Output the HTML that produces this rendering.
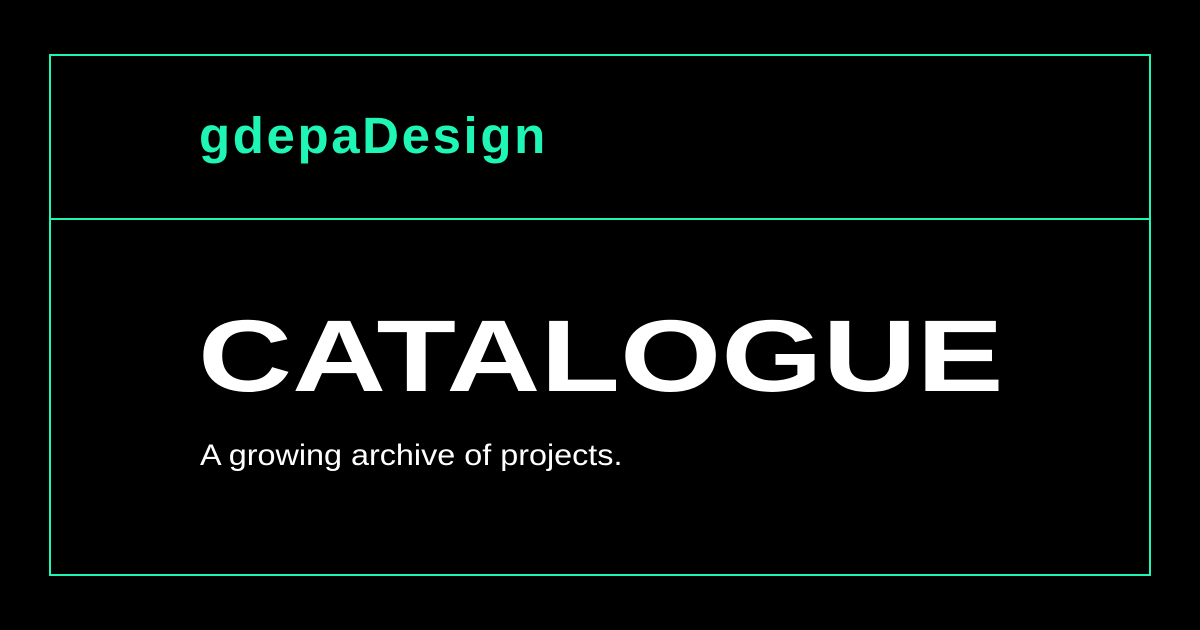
<!DOCTYPE html>
<html><head><meta charset="utf-8"><style>
html,body{margin:0;padding:0;background:#000;width:1200px;height:630px;overflow:hidden}
.box{position:absolute;left:49px;top:54px;width:1098px;height:518px;border:2px solid #1ff5b5}
.line{position:absolute;left:49px;top:218px;width:1102px;height:2px;background:#1ff5b5}
.t{position:absolute;font-family:"Liberation Sans",sans-serif;white-space:nowrap;transform-origin:0 0}
.logo{left:199px;top:106px;font-size:51px;line-height:60px;font-weight:bold;color:#1ff5b5;letter-spacing:2.6px}
.cat{left:198px;top:305px;font-size:102px;line-height:102px;font-weight:bold;color:#fff;transform:scaleX(1.277)}
.sub{left:200px;top:438px;font-size:30px;line-height:36px;color:#fff;transform:scaleX(1.078)}
</style></head><body>
<div class="box"></div><div class="line"></div>
<div class="t logo">gdepaDesign</div>
<div class="t cat">CATALOGUE</div>
<div class="t sub">A growing archive of projects.</div>
</body></html>
